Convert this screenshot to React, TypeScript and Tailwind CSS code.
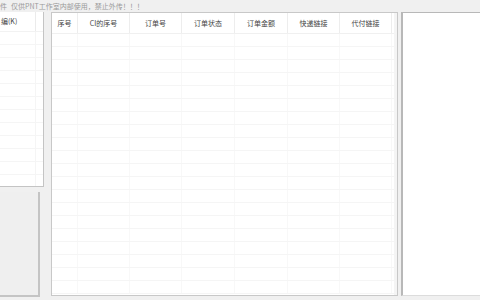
import React from "react";

const cols = [
  { label: "序号", w: 26 },
  { label: "CI的序号", w: 52 },
  { label: "订单号", w: 52 },
  { label: "订单状态", w: 53 },
  { label: "订单金额", w: 53 },
  { label: "快递链接", w: 52 },
  { label: "代付链接", w: 52 },
];

const rows = Array.from({ length: 20 });

export default function App() {
  return (
    <div
      className="w-[480px] h-[300px] bg-[#f0f0f0] flex flex-col overflow-hidden"
      style={{ fontFamily: '"Noto Sans CJK SC", "Noto Sans", sans-serif' }}
    >
      <div className="h-[12px] flex items-center pl-0 text-[7px] leading-none text-[#9a9a9a] whitespace-nowrap">
        <span>件</span>
        <span className="ml-[4px]">仅供PNT工作室内部使用，禁止外传！！！</span>
      </div>
      <div className="flex flex-1 min-h-0">
        <div className="w-[44px] flex flex-col">
          <div className="h-[175px] bg-white border-r border-b border-[#c4c4c4] flex flex-col overflow-hidden">
            <div className="h-[20px] shrink-0 flex items-center border-b border-[#f2f2f2]">
              <div className="w-[36px] border-r border-[#ebebeb] h-full flex items-center text-[7px] text-[#444] whitespace-nowrap">
                <span className="ml-[1px]">编(K)</span>
              </div>
            </div>
            {rows.map((_, i) => (
              <div key={i} className="h-[13px] shrink-0 border-b border-[#f5f5f5] flex">
                <div className="w-[36px] border-r border-[#f5f5f5]" />
              </div>
            ))}
          </div>
          <div className="mt-[5px] h-[105px] w-[40px] bg-[#efefef] border-r-2 border-b-2 border-[#c4c4c4]" />
        </div>
        <div className="ml-[7px] w-[347px] mb-[4px] bg-[#f4f4f4] border border-[#c8c8c8] flex">
          <div className="w-[342px] bg-white flex flex-col overflow-hidden">
            <div className="h-[21px] shrink-0 flex border-b border-[#f0f0f0]">
              {cols.map((c, i) => (
                <div
                  key={i}
                  style={{ width: c.w }}
                  className="shrink-0 h-full flex items-center justify-center text-[7px] text-[#444] border-r border-[#ededed] whitespace-nowrap"
                >
                  {c.label}
                </div>
              ))}
            </div>
            {rows.map((_, i) => (
              <div key={i} className="h-[13px] shrink-0 flex border-b border-[#f5f5f5]">
                {cols.map((c, j) => (
                  <div key={j} style={{ width: c.w }} className="shrink-0 border-r border-[#f8f8f8]" />
                ))}
              </div>
            ))}
          </div>
        </div>
        <div className="ml-[3px] flex-1 mb-[4px] bg-white border-l-2 border-t border-[#b8b8b8] border-b border-b-[#dcdcdc]" />
      </div>
    </div>
  );
}
